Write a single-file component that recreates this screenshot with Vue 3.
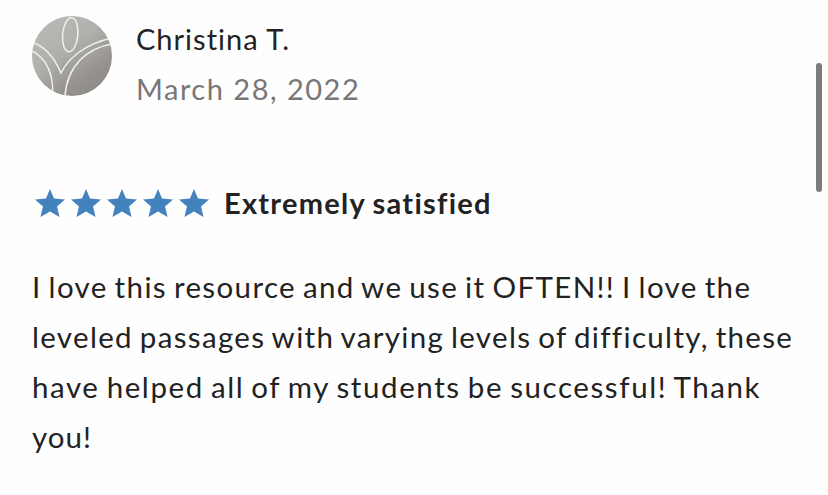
<script setup>
const review = {
  name: "Christina T.",
  date: "March 28, 2022",
  rating: 5,
  summary: "Extremely satisfied",
  lines: [
    "I love this resource and we use it OFTEN!! I love the",
    "leveled passages with varying levels of difficulty, these",
    "have helped all of my students be successful! Thank",
    "you!",
  ],
};
</script>

<template>
  <div class="page">
    <article class="review">
      <header class="author">
        <svg class="avatar" viewBox="0 0 80 80" aria-hidden="true">
          <defs>
            <linearGradient id="avatar-fill" x1="0.2" y1="0.05" x2="0.8" y2="0.9">
              <stop offset="0" stop-color="#b9b8b5" />
              <stop offset="0.4" stop-color="#b1b0ad" />
              <stop offset="0.8" stop-color="#979490" />
              <stop offset="1" stop-color="#8f8c88" />
            </linearGradient>
            <clipPath id="avatar-clip"><circle cx="40" cy="40" r="40" /></clipPath>
          </defs>
          <g clip-path="url(#avatar-clip)">
            <rect width="80" height="80" fill="url(#avatar-fill)" />
            <g fill="none" stroke="#efefed" stroke-width="1.5">
              <ellipse cx="38.2" cy="18.8" rx="7.6" ry="17" transform="rotate(5 38.2 18.8)" />
              <path d="M0 26C14 31 23 43 29 57C36 43 52 28 80 22" />
              <path d="M0 35C14 42 22 58 20.5 80" />
              <path d="M80 28C55 32 35 50 33 80" />
            </g>
          </g>
        </svg>
        <div class="meta">
          <div class="name">{{ review.name }}</div>
          <div class="date">{{ review.date }}</div>
        </div>
      </header>

      <div class="rating">
        <div class="stars">
          <svg v-for="n in review.rating" :key="n" class="star" viewBox="0 0 30 28">
            <path d="M15 0L19 9.5L30 10.5L22 17.6L24.5 28L15 22.6L5.5 28L8 17.6L0 10.5L11 9.5Z" />
          </svg>
        </div>
        <span class="summary">{{ review.summary }}</span>
      </div>

      <p class="body">
        <span v-for="(line, i) in review.lines" :key="i" class="line" :class="`line-${i + 1}`">{{ line }}</span>
      </p>
    </article>
    <div class="scrollbar"></div>
  </div>
</template>

<style>
body {
  background: #fefefe;
  overflow: hidden;
}
</style>

<style scoped>
.page {
  position: relative;
  box-sizing: border-box;
  width: 828px;
  height: 495px;
  padding: 16px 0 0 32px;
  overflow: hidden;
  font-family: Lato, "Open Sans", sans-serif;
  font-size: 29px;
  line-height: 50px;
  color: #222;
}

.author {
  display: flex;
  gap: 24px;
  height: 98px;
}

.avatar {
  width: 80px;
  height: 80px;
}

.meta {
  margin-top: -2px;
}

.name {
  letter-spacing: 1px;
}

.date {
  color: #777;
  letter-spacing: 1.5px;
}

.rating {
  display: flex;
  align-items: center;
  height: 50px;
  margin-top: 64px;
}

.stars {
  display: flex;
  gap: 6px;
  margin: 0 15px 0 3px;
}

.star {
  width: 30px;
  height: 28px;
  fill: #4382bd;
}

.summary {
  font-weight: 700;
  letter-spacing: 1.25px;
  word-spacing: -1px;
}

.body {
  margin: 34px 0 0;
  font-size: 29.5px;
  word-spacing: -2px;
}

.line {
  display: block;
  width: max-content;
  white-space: nowrap;
}

.line-1 {
  letter-spacing: 1.37px;
}

.line-2 {
  letter-spacing: 1.33px;
}

.line-3 {
  letter-spacing: 1.58px;
}

.line-4 {
  letter-spacing: 1px;
}

.scrollbar {
  position: absolute;
  top: 63px;
  right: 6px;
  width: 6px;
  height: 129px;
  border-radius: 3px;
  background: #7c7c7c;
}
</style>
